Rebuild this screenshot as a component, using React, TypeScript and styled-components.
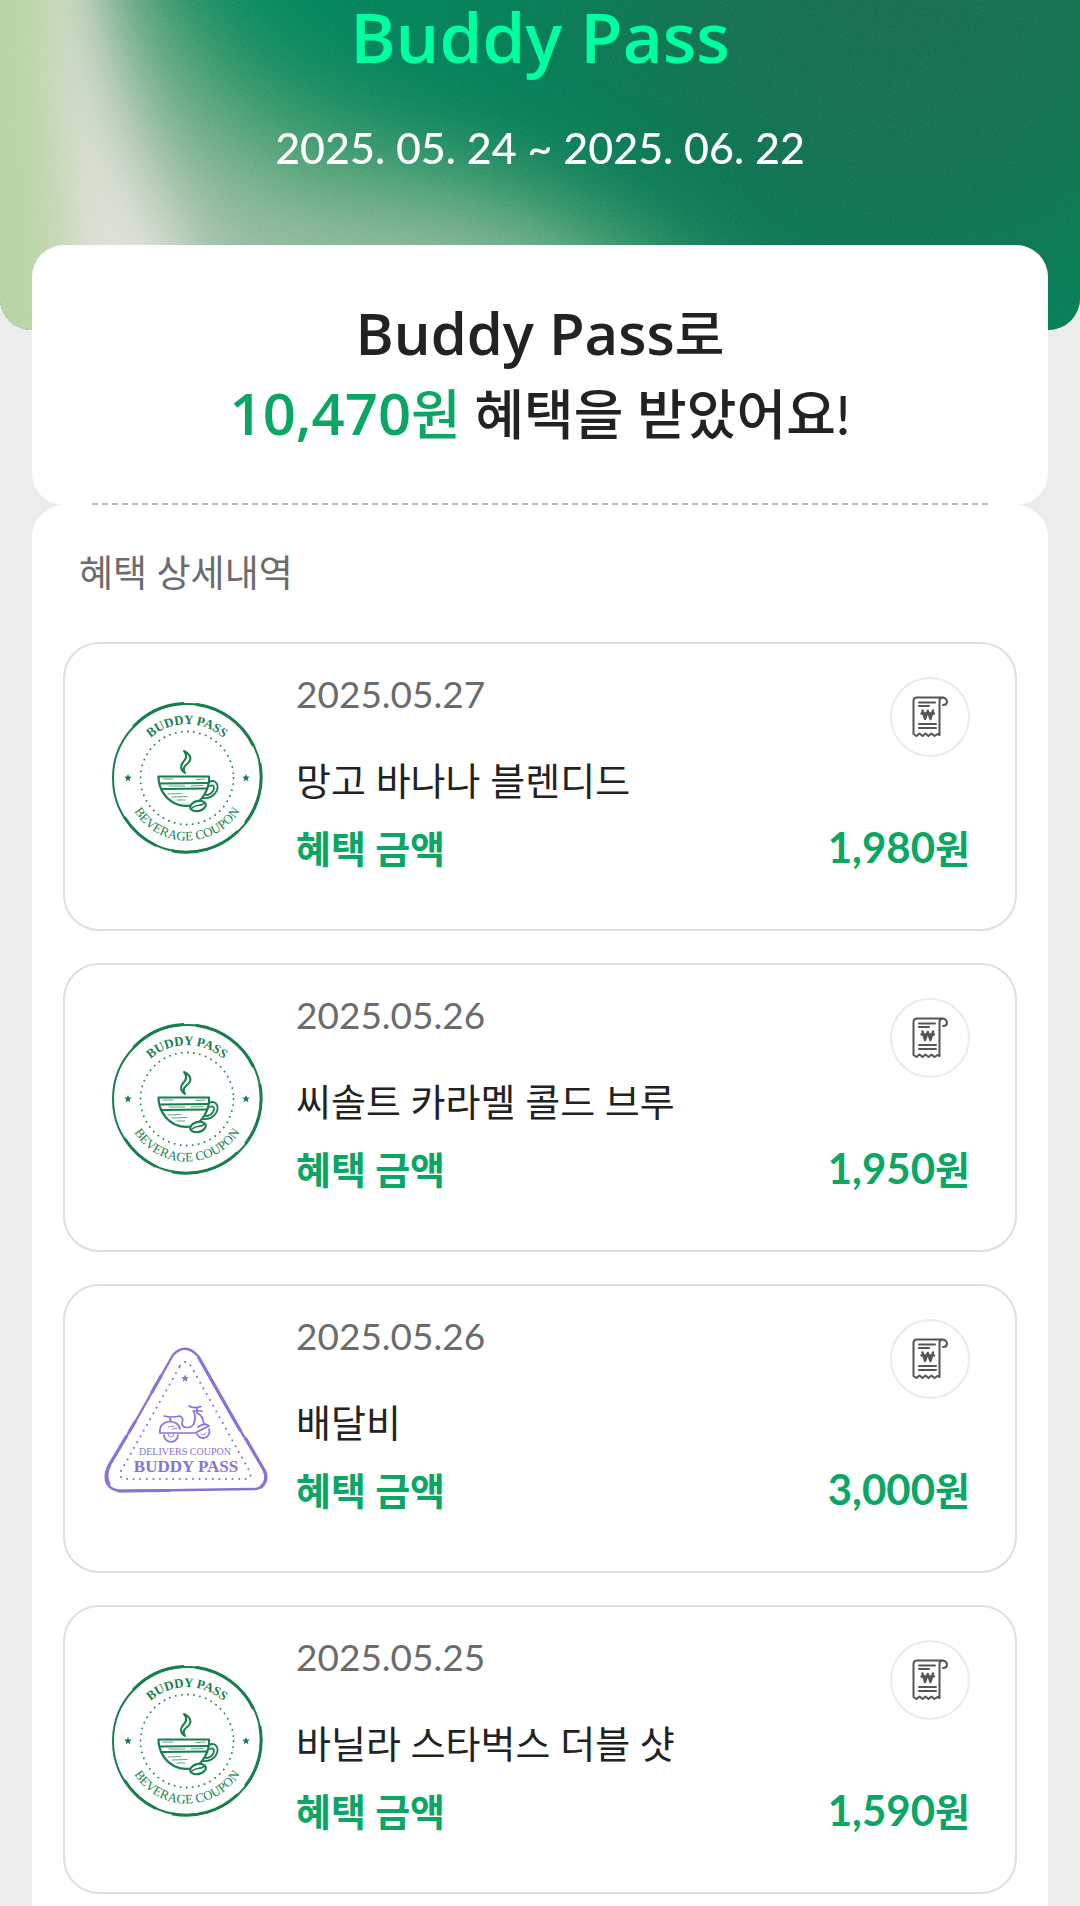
import React, { useId } from "react";
import styled, { createGlobalStyle } from "styled-components";

const GlobalStyle = createGlobalStyle`
  * { box-sizing: border-box; }
  body { margin: 0; background: #ececec; font-family: Lato, "Noto Sans CJK KR", sans-serif; color: #222; }
  h1, h2, h3, p, ul { margin: 0; padding: 0; }
`;

const Page = styled.div`
  display: flex;
  flex-direction: column;
`;

const Hero = styled.header`
  position: relative;
  height: 330px;
  text-align: center;
`;

const HeroArt = styled.svg`
  position: absolute;
  inset: 0;
  width: 100%;
  height: 100%;
  border-radius: 0 0 32px 32px;
  background: #067d55;
`;

const Grain = styled.rect`
  mix-blend-mode: soft-light;
`;

const HeroTitle = styled.h1`
  position: relative;
  font-family: "Open Sans", "Noto Sans CJK KR", sans-serif;
  font-size: 69px;
  line-height: 72px;
  font-weight: 600;
  color: #00ffa1;
`;

const Period = styled.p`
  position: relative;
  margin-top: 50px;
  font-size: 43px;
  line-height: 52px;
  font-weight: 500;
  color: #fff;
`;

const Main = styled.main`
  position: relative;
  display: flex;
  flex-direction: column;
  margin: -85px 32px 0;
`;

const Summary = styled.section`
  padding: 50px 60px 0;
  border-radius: 32px;
  background: #fff;
  text-align: center;
`;

const Headline = styled.h2`
  padding-bottom: 48px;
  border-bottom: 2px dashed #bbb;
  font-size: 54px;
  line-height: 80px;
  font-weight: 500;
`;

const Line = styled.span`
  display: block;
`;

const Latin = styled.span`
  font-family: "Open Sans", "Noto Sans CJK KR", sans-serif;
  font-size: 58px;
  line-height: 58px;
  font-weight: 600;
`;

const Total = styled.strong`
  font-weight: 500;
  color: #0aa663;
`;

const Details = styled.section`
  padding: 38px 31px 32px;
  border-radius: 32px 32px 0 0;
  background: #fff;
`;

const DetailsTitle = styled.h3`
  margin-left: 16px;
  font-size: 37px;
  line-height: 60px;
  font-weight: 400;
  color: #6b6b6b;
`;

const List = styled.ul`
  display: flex;
  flex-direction: column;
  gap: 32px;
  margin-top: 39px;
  list-style: none;
`;

const Item = styled.li`
  display: flex;
  align-items: center;
  height: 289px;
  padding: 0 45px 0 36px;
  border: 2px solid #dfdfdf;
  border-radius: 36px;
  background: #fff;
`;

const Stamp = styled.svg`
  flex: none;
  width: 170px;
  height: 180px;
  margin: -18px 25px 0 0;
`;

const Info = styled.div`
  flex: 1;
  height: 219px;
`;

const Top = styled.div`
  display: flex;
  justify-content: space-between;
  align-items: flex-start;
  height: 73px;
`;

const DateText = styled.time`
  font-size: 37px;
  line-height: 34px;
  color: #6b6b6b;
`;

const ReceiptButton = styled.button`
  display: grid;
  place-items: center;
  width: 80px;
  height: 80px;
  padding: 0;
  border: 2px solid #ebebeb;
  border-radius: 50%;
  background: #fff;
`;

const Name = styled.p`
  font-size: 38px;
  line-height: 60px;
`;

const Benefit = styled.div`
  display: flex;
  justify-content: space-between;
  align-items: baseline;
  margin-top: 8px;
  font-size: 38px;
  line-height: 60px;
  font-weight: 700;
  color: #0aa663;
`;

const Figure = styled.span`
  font-size: 42px;
  line-height: 42px;
`;

const star = (cx: number, cy: number, r: number) =>
  Array.from({ length: 10 }, (_, i) => {
    const a = -Math.PI / 2 + (i * Math.PI) / 5;
    const d = i % 2 ? r * 0.45 : r;
    return `${(cx + d * Math.cos(a)).toFixed(2)},${(cy + d * Math.sin(a)).toFixed(2)}`;
  }).join(" ");

function BeverageStamp() {
  const id = useId();
  return (
    <Stamp viewBox="0 0 170 180" fill="none" stroke="#177f4e" strokeLinecap="round" strokeLinejoin="round" role="img" aria-label="Beverage coupon">
      <defs>
        <path id={`${id}t`} d="M32 90 A54 54 0 0 1 140 90" />
        <path id={`${id}b`} d="M23.500 90 A62.500 62.500 0 0 0 148.500 90" />
      </defs>
      <circle cx="86" cy="90" r="74" strokeWidth="2" />
      <path d="M33 38 A74 74 0 0 1 82 15.500 M96 16.500 A74 74 0 0 1 152 57 M159 76 A74 74 0 0 1 145 134 M136 144 A74 74 0 0 1 72 163 M54 157 A74 74 0 0 1 24 130" strokeWidth="3" />
      <circle cx="86" cy="90" r="46.500" strokeWidth="1.800" strokeDasharray="0.100 6" />
      <g fill="#177f4e" stroke="none" fontFamily="Liberation Serif, serif">
        <text fontSize="13" fontWeight="700"><textPath href={`#${id}t`} startOffset="50%" textAnchor="middle">BUDDY PASS</textPath></text>
        <text fontSize="13"><textPath href={`#${id}b`} startOffset="50%" textAnchor="middle">BEVERAGE COUPON</textPath></text>
        <polygon points={star(27, 90, 4)} />
        <polygon points={star(145, 90, 4)} />
      </g>
      <path d="M57.500 88.500 L108 88.500 C109 101 101 113 92 117 Q83 119.500 74 115.500 C63 110 57.500 99 57.500 88.500 Z" strokeWidth="2.200" />
      <path d="M60 95.500 L107 95 M61 101 L106 100.500" strokeWidth="2" />
      <path d="M68 98 L84 98 M90 98 L102 97.500 M67 106 L80 105.500 M71 109 L86 108.500 M76 112 L84 112 M62 91 L72 91 M95 91.500 L104 91" strokeWidth="0.700" />
      <path d="M108 94 C114 91 118 96 116 102 C114 108 107 111 102 110 M109 98 C113 96 114 100 112 103 C110 106 107 107 105 107" strokeWidth="1.800" />
      <ellipse cx="97" cy="118" rx="8" ry="5" transform="rotate(-14 97 118)" fill="#fff" strokeWidth="2.200" />
      <path d="M91 120 C95 116 98 119 103 115.500" strokeWidth="1.600" />
      <path d="M83 63 C91 67 91 72 86 76 C82 79 82 82 84 85 C79 82 79 77 83 73 C86 70 86 67 83 63 Z" strokeWidth="2" />
    </Stamp>
  );
}

function DeliveryStamp() {
  return (
    <Stamp viewBox="0 0 170 180" fill="none" stroke="#8374d8" strokeLinecap="round" strokeLinejoin="round" role="img" aria-label="Delivery coupon">
      <path d="M72 25 Q84 12 97 26 L129 83 L163 140 C168 150 162 160 151 159 L20 161 C7 160 1 151 7 137 L33 94 Z" strokeWidth="2.400" />
      <path d="M60 46 L51 62 M34 92 L28 102 M25 107 L9 134 Q3 146 8 154 M98 28 L127 79 L139 100 M145 109 L163 140 Q168 150 160 157 M18 161 L68 160.500" strokeWidth="3.200" />
      <path d="M79 36 Q84 28 90 36 L149 142 Q151 148 146 149 L23 149 Q17 147 20 141 Z" strokeWidth="2" strokeDasharray="0.100 6.500" />
      <g fill="#8374d8" stroke="none" fontFamily="Liberation Serif, serif" textAnchor="middle">
        <polygon points={star(84, 48.500, 4)} />
        <text x="84" y="125" fontSize="10">DELIVERS COUPON</text>
        <text x="85" y="142" fontSize="17" fontWeight="700">BUDDY PASS</text>
      </g>
      <path d="M63 86 Q71 88 79 86 Q83 88 81 93 C81 99 91 99 93 93 Q95 88 93 82 M88 76 Q92 79 100 76.500 M92 81 L101 81 M96 78 L96 83 Q102 85 103 95 M69 88 L70 92 M59 103 C57 89 77 88 79 99 M59 103 L94 103 L108 96 Q104 92 97 97" strokeWidth="1.700" />
      <path d="M63 105 A7 7 0 0 0 77 105 M96 104 A6.500 6.500 0 1 0 108 99" strokeWidth="1.700" />
      <path d="M67 104 A3 3 0 0 0 73 104 M100 104 A3 3 0 0 0 105 103 M67 97 L73 96 M71 99 L76 98" strokeWidth="0.900" />
    </Stamp>
  );
}

function ReceiptIcon() {
  return (
    <svg width="36" height="42" viewBox="0 0 36 42" fill="none" stroke="#555" strokeWidth="2" strokeLinecap="round" strokeLinejoin="round" aria-hidden="true">
      <path d="M30 1.500 H5 Q1.500 1.500 1.500 5 V38 L4.500 40 L7.500 37.500 L10.500 40 L13.500 37.500 L16.500 40 L19.500 37.500 L22.500 40 L25.500 38 L27.500 39 V5 Q27.500 1.500 31 1.500 Q35 2.500 35 6 Q34.500 9 31 9" />
      <path d="M7 6.500 H23 M7 10 H17 M7 28 H24 M7 32 H24" />
      <path d="M10.500 14.500 L13 23 L15.800 15 L18.500 23 L21 14.500 M9.500 17.500 H22" strokeWidth="2.400" />
    </svg>
  );
}

type Entry = { date: string; name: string; amount: string; kind: "beverage" | "delivery" };

const entries: Entry[] = [
  { date: "2025.05.27", name: "망고 바나나 블렌디드", amount: "1,980", kind: "beverage" },
  { date: "2025.05.26", name: "씨솔트 카라멜 콜드 브루", amount: "1,950", kind: "beverage" },
  { date: "2025.05.26", name: "배달비", amount: "3,000", kind: "delivery" },
  { date: "2025.05.25", name: "바닐라 스타벅스 더블 샷", amount: "1,590", kind: "beverage" },
];

function Artwork() {
  return (
    <HeroArt viewBox="0 0 1080 330" preserveAspectRatio="none" aria-hidden="true">
      <defs>
        <radialGradient id="deep" gradientUnits="userSpaceOnUse" cx="900" cy="-20" r="640">
          <stop offset="0" stopColor="#18694b" />
          <stop offset="0.35" stopColor="#106f4e" />
          <stop offset="0.6" stopColor="#067a53" />
          <stop offset="1" stopColor="#05855a" />
        </radialGradient>
        <filter id="wide" x="-50%" y="-50%" width="200%" height="200%" colorInterpolationFilters="sRGB"><feGaussianBlur stdDeviation="48" /></filter>
        <filter id="mid" x="-50%" y="-50%" width="200%" height="200%" colorInterpolationFilters="sRGB"><feGaussianBlur stdDeviation="32" /></filter>
        <filter id="near" x="-50%" y="-50%" width="200%" height="200%" colorInterpolationFilters="sRGB"><feGaussianBlur stdDeviation="26" /></filter>
        <filter id="grain" x="0" y="0" width="100%" height="100%">
          <feTurbulence type="fractalNoise" baseFrequency="0.6" numOctaves="2" seed="4" />
          <feColorMatrix type="matrix" values="1 0 0 0 0 1 0 0 0 0 1 0 0 0 0 0 0 0 0 1" />
        </filter>
      </defs>
      <rect width="1080" height="330" fill="url(#deep)" />
      <path d="M-150 -150 H120 C160 30 270 100 400 140 Q590 190 720 290 L760 480 H-150 Z" fill="#3f9a6a" filter="url(#wide)" />
      <path d="M-150 -150 H80 C120 50 190 170 330 205 Q530 215 620 310 V480 H-150 Z" fill="#98bca0" filter="url(#wide)" />
      <path d="M-150 -150 H66 C86 40 116 140 182 235 L250 480 H-150 Z" fill="#dddfd6" filter="url(#mid)" />
      <path d="M-150 -150 H62 C52 60 60 160 84 480 H-150 Z" fill="#b5d2a1" filter="url(#near)" />
      <Grain width="1080" height="330" filter="url(#grain)" opacity="0.25" />
    </HeroArt>
  );
}

export default function App() {
  return (
    <Page>
      <GlobalStyle />
      <Hero>
        <Artwork />
        <HeroTitle>Buddy Pass</HeroTitle>
        <Period>2025. 05. 24 ~ 2025. 06. 22</Period>
      </Hero>
      <Main>
        <Summary>
          <Headline>
            <Line><Latin>Buddy Pass</Latin>로</Line>
            <Line><Total><Latin>10,470</Latin>원</Total> 혜택을 받았어요!</Line>
          </Headline>
        </Summary>
        <Details>
          <DetailsTitle>혜택 상세내역</DetailsTitle>
          <List>
            {entries.map((e) => (
              <Item key={e.date + e.name}>
                {e.kind === "beverage" ? <BeverageStamp /> : <DeliveryStamp />}
                <Info>
                  <Top>
                    <DateText>{e.date}</DateText>
                    <ReceiptButton type="button" aria-label={`${e.name} 영수증`}><ReceiptIcon /></ReceiptButton>
                  </Top>
                  <Name>{e.name}</Name>
                  <Benefit><span>혜택 금액</span><span><Figure>{e.amount}</Figure>원</span></Benefit>
                </Info>
              </Item>
            ))}
          </List>
        </Details>
      </Main>
    </Page>
  );
}
